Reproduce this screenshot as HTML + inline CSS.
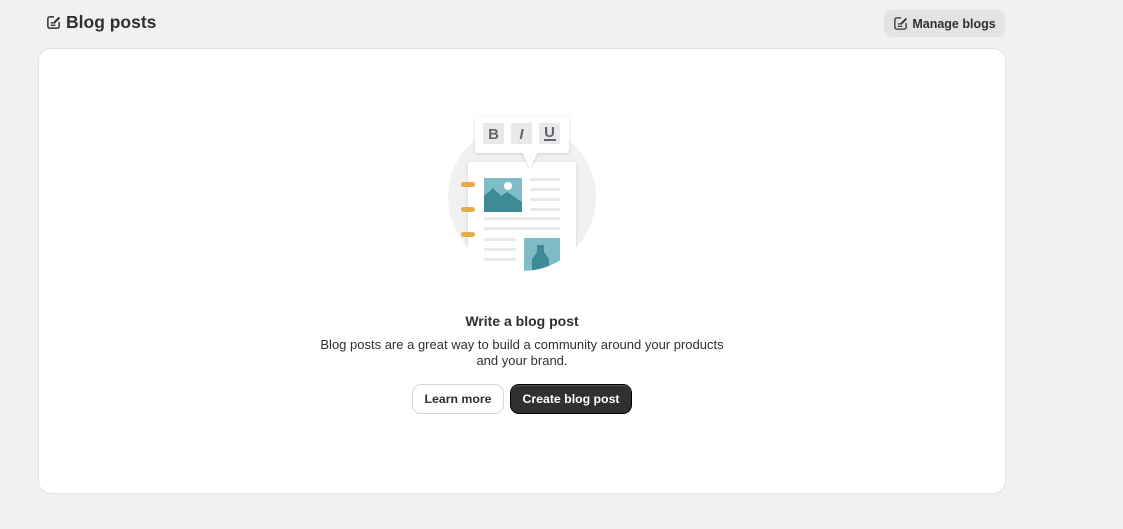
<!DOCTYPE html>
<html><head><meta charset="utf-8"><style>
*{box-sizing:border-box;margin:0;padding:0}
body{width:1123px;height:529px;background:#f1f1f1;font-family:"Liberation Sans",sans-serif;color:#303030;position:relative;overflow:hidden}
.title{position:absolute;left:46px;top:12px;font-size:17.5px;font-weight:700;display:flex;align-items:center;gap:5px;color:#303030}
.mb{position:absolute;left:884px;top:10px;width:121px;height:27px;background:#e3e3e3;border-radius:8px;font-size:12.5px;font-weight:700;display:flex;align-items:center;justify-content:center;gap:4px;color:#303030}
.card{position:absolute;left:39px;top:49px;width:966px;height:444px;background:#fff;border-radius:12px;box-shadow:0 0 0 1px #e3e3e3,0 1px 0 #d4d4d4}
.h{position:absolute;left:39px;width:966px;text-align:center}
.btn{position:absolute;top:385px;height:28px;border-radius:8px;font-size:12.3px;font-weight:700;display:flex;align-items:center;justify-content:center}
</style></head><body>
<div class="title"><svg width="15" height="15" viewBox="0 0 16 16"><path d="M8.5 2H4A2 2 0 0 0 2 4v8a2 2 0 0 0 2 2h8a2 2 0 0 0 2-2V7.5" fill="none" stroke="#303030" stroke-width="1.6"/><path d="M5 8.5h3M5 11h5" stroke="#303030" stroke-width="1.5"/><path d="M8.3 8.7l6-6" stroke="#303030" stroke-width="2.2"/></svg>Blog posts</div>
<div class="mb"><svg width="15" height="15" viewBox="0 0 16 16"><path d="M8.5 2H4A2 2 0 0 0 2 4v8a2 2 0 0 0 2 2h8a2 2 0 0 0 2-2V7.5" fill="none" stroke="#303030" stroke-width="1.4"/><path d="M5 8.5h3M5 11h5" stroke="#303030" stroke-width="1.3"/><path d="M8.3 8.7l6-6" stroke="#303030" stroke-width="2"/></svg>Manage blogs</div>
<div class="card"></div>
<svg style="position:absolute;left:0;top:0" width="1123" height="529">
<defs><clipPath id="c"><circle cx="522" cy="197" r="74"/><rect x="440" y="100" width="170" height="97"/></clipPath>
<filter id="s" x="-20%" y="-20%" width="140%" height="140%"><feDropShadow dx="0" dy="1" stdDeviation="1.5" flood-color="#000" flood-opacity="0.15"/></filter></defs>
<circle cx="522" cy="197" r="74" fill="#f1f1f1"/>
<g clip-path="url(#c)">
<rect x="468" y="162" width="108" height="130" fill="#fff" filter="url(#s)"/>
<rect x="484" y="178" width="38" height="34" rx="1" fill="#7fbcc5"/>
<path d="M484 212v-16l9-8 8 8 6-4 15 10v10z" fill="#3d8b96"/>
<circle cx="508" cy="186" r="4" fill="#fff"/>
<g fill="#e9e9ea"><rect x="530" y="178" width="30" height="3"/><rect x="530" y="188" width="30" height="3"/><rect x="530" y="198" width="30" height="3"/><rect x="530" y="208" width="30" height="3"/><rect x="484" y="217" width="76" height="3"/><rect x="484" y="227" width="76" height="3"/><rect x="484" y="238" width="32" height="3"/><rect x="484" y="248" width="32" height="3"/><rect x="484" y="258" width="32" height="3"/></g>
<rect x="524" y="238" width="36" height="40" fill="#7fbcc5"/>
<path d="M537 245h7v7l5 7v20h-17v-20l5-7z" fill="#3d8b96"/>
</g>
<g fill="#e8a94a"><rect x="461" y="182" width="14" height="5" rx="2.5"/><rect x="461" y="207" width="14" height="5" rx="2.5"/><rect x="461" y="232" width="14" height="5" rx="2.5"/></g>
<g filter="url(#s)"><rect x="475" y="116" width="94" height="37" rx="3" fill="#fff"/><path d="M522 152l8 16 8-16z" fill="#fff"/></g>
<g fill="#e8e9ea"><rect x="483" y="123" width="21" height="21" rx="1"/><rect x="511" y="123" width="21" height="21" rx="1"/><rect x="539" y="123" width="21" height="21" rx="1"/></g>
<g font-family="Liberation Sans,sans-serif" font-weight="700" font-size="15" fill="#62666a" text-anchor="middle"><text x="493.5" y="139">B</text><text x="521.5" y="139" font-style="italic">I</text><text x="549.5" y="137">U</text></g>
<rect x="544" y="139" width="12" height="2" fill="#62666a"/>
</svg>
<div class="h" style="top:313px;font-size:14px;font-weight:700">Write a blog post</div>
<div class="h" style="top:337px;font-size:13px;line-height:16px">Blog posts are a great way to build a community around your products<br>and your brand.</div>
<div class="btn" style="left:413px;width:90px;background:#fff;box-shadow:0 0 0 1px #d8d8d8,0 1px 0 #c8c8c8">Learn more</div>
<div class="btn" style="left:511px;width:120px;background:#303030;color:#fff;box-shadow:0 0 0 1px #000,inset 0 1px 0 #555">Create blog post</div>
</body></html>
